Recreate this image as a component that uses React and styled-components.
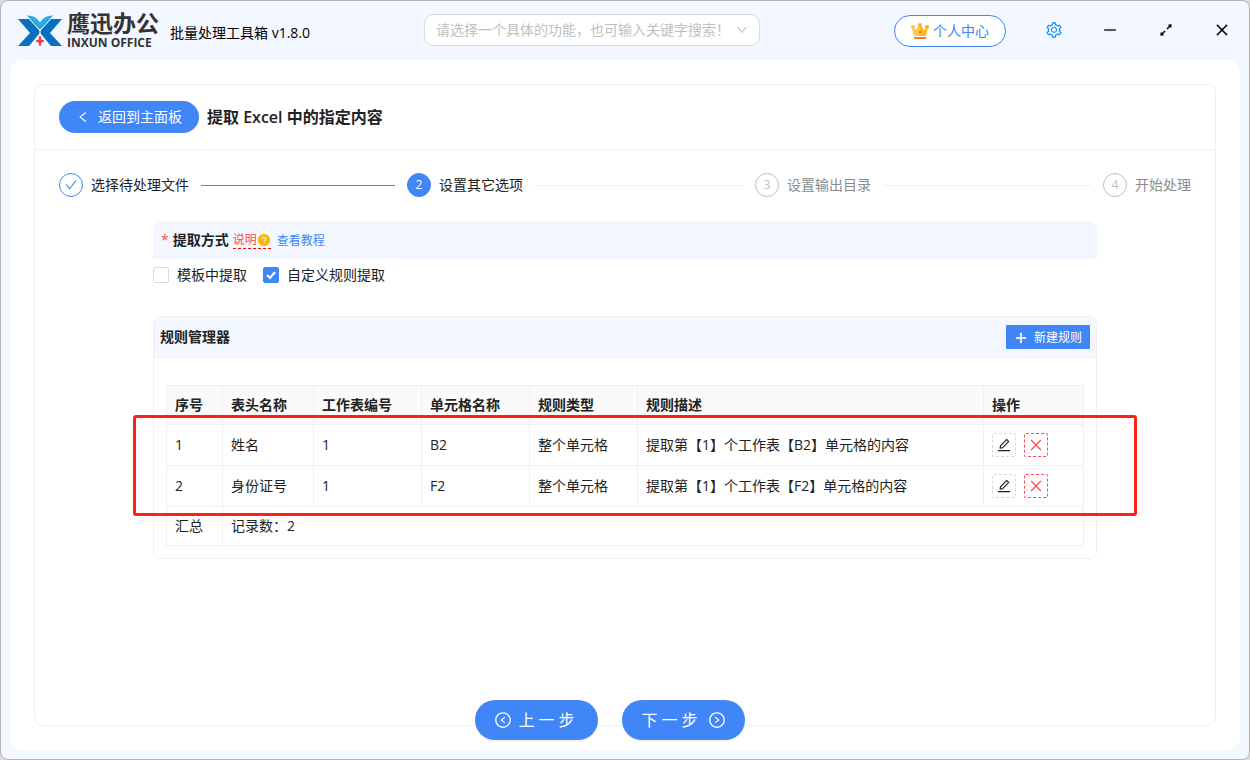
import React, { useState } from 'react';
import styled, { createGlobalStyle, css } from 'styled-components';
import {
  AiOutlineArrowsAlt,
  AiOutlineCheck,
  AiOutlineClose,
  AiOutlineDown,
  AiOutlineEdit,
  AiOutlineLeft,
  AiOutlineLeftCircle,
  AiOutlineMinus,
  AiOutlinePlus,
  AiOutlineRightCircle,
  AiOutlineSetting,
  AiFillQuestionCircle,
} from 'react-icons/ai';

const blue = '#4086f7';
const line = '#f0f0f0';
const pale = '#f3f7ff';

const GlobalStyle = createGlobalStyle`
  * {
    box-sizing: border-box;
  }

  body {
    margin: 0;
    background: #dcdcdc;
    color: #222;
    font-family: 'Open Sans', 'Noto Sans CJK SC', sans-serif;
    font-size: 14px;
    line-height: 22px;
  }

  button, input {
    font: inherit;
  }

  button {
    cursor: pointer;
  }

  svg {
    display: block;
    flex: none;
  }
`;

// --- Window ---

const Window = styled.div`
  display: flex;
  flex-direction: column;
  min-height: 100vh;
  padding: 0 9px 9px;
  background: ${pale};
  border: 1px solid #b4b4b4;
  border-radius: 8px;
`;

const TopBar = styled.header`
  display: grid;
  grid-template-columns: 11fr 336px 13fr;
  align-items: center;
  height: 59px;
  padding-left: 8px;
`;

const Brand = styled.div`
  display: flex;
  align-items: center;
  gap: 5px;
  color: #333;
`;

const BrandText = styled.div`
  display: flex;
  flex-direction: column;
  gap: 2px;
  margin: 0 6px 2px 0;
`;

const BrandName = styled.span`
  font-size: 23px;
  font-weight: 700;
  line-height: 24px;
`;

const BrandSub = styled.span`
  font-size: 12px;
  font-weight: 700;
  line-height: 12px;
`;

const Version = styled.span`
  padding-top: 4px;
  color: #000;
`;

const SearchBox = styled.label`
  display: flex;
  align-items: center;
  height: 32px;
  margin-bottom: 2px;
  padding: 0 11px;
  background: #fff;
  border: 1px solid #d9d9d9;
  border-radius: 10px;
  color: #bfbfbf;

  input {
    flex: 1;
    min-width: 0;
    padding: 0;
    border: 0;
    outline: 0;
    background: none;
  }

  input::placeholder {
    color: #bfbfbf;
  }
`;

const TopActions = styled.div`
  display: flex;
  align-items: center;
  justify-content: flex-end;
  gap: 32px;
  padding-right: 6px;
`;

const ProfileButton = styled.button`
  display: flex;
  align-items: center;
  gap: 4px;
  height: 32px;
  margin-right: 4px;
  padding: 0 16px;
  background: #fff;
  border: 1px solid ${blue};
  border-radius: 16px;
  color: ${blue};
`;

const WindowButton = styled.button`
  display: grid;
  place-items: center;
  width: 24px;
  height: 24px;
  margin-bottom: 2px;
  padding: 0;
  background: none;
  border: 0;
  color: ${({ $color }) => $color || '#000'};

  svg {
    stroke-width: ${({ $bold }) => ($bold ? 20 : 0)};
  }
`;

const Page = styled.main`
  display: flex;
  flex: 1;
  flex-direction: column;
  padding: 24px;
  background: #fff;
  border-radius: 12px;
`;

const Card = styled.section`
  display: flex;
  flex: 1;
  flex-direction: column;
  border: 1px solid ${line};
  border-radius: 8px;
`;

const CardHead = styled.div`
  display: flex;
  align-items: center;
  gap: 8px;
  padding: 16px 24px;
  border-bottom: 1px solid ${line};
`;

const CardTitle = styled.h1`
  margin: 0;
  font-size: 16px;
  font-weight: 600;
`;

const BackButton = styled.button`
  display: flex;
  align-items: center;
  gap: 8px;
  height: 32px;
  padding: 0 17px;
  background: ${blue};
  border: 0;
  border-radius: 16px;
  color: #fff;
`;

// --- Steps ---

const StepList = styled.ol`
  display: flex;
  margin: 0;
  padding: 23px 24px 24px;
  list-style: none;
`;

const Step = styled.li`
  display: flex;
  flex: 1;
  align-items: center;
  gap: 8px;
  margin-right: 12px;
  color: ${({ $state }) => ($state === 'wait' ? '#8c8c8c' : '#222')};
  white-space: nowrap;

  &::after {
    content: '';
    flex: 1;
    height: 1px;
    margin-left: 4px;
    background: ${({ $state }) => ($state === 'done' ? blue : line)};
  }

  &:last-child {
    flex: none;
    margin-right: 0;
  }

  &:last-child::after {
    display: none;
  }
`;

const StepMark = styled.span`
  display: grid;
  place-items: center;
  width: 24px;
  height: 24px;
  border: 1px solid #bfbfbf;
  border-radius: 50%;
  color: #bfbfbf;
  font-size: 12px;

  ${({ $state }) =>
    $state !== 'wait' &&
    css`
      border-color: ${blue};
      background: ${$state === 'active' ? blue : '#fff'};
      color: ${$state === 'active' ? '#fff' : blue};
    `}
`;

// --- Form ---

const Content = styled.div`
  width: 80%;
  margin: 0 auto;
`;

const FieldHead = styled.div`
  display: flex;
  align-items: center;
  height: 38px;
  padding: 0 8px;
  background: ${pale};
  border-radius: 8px 8px 0 0;
`;

const Required = styled.span`
  margin-right: 4px;
  color: #ff4d4f;
`;

const FieldTitle = styled.h2`
  margin: 0 4px 0 0;
  font-size: 14px;
  font-weight: 600;
`;

const HelpLink = styled.a`
  display: flex;
  align-items: center;
  margin-right: 6px;
  padding-top: 1px;
  border-bottom: 1px dashed #f00;
  color: #ff4d4f;
  font-size: 12px;
  line-height: 16px;
  text-decoration: none;

  svg {
    color: #f9b90c;
  }
`;

const TutorialLink = styled.a`
  padding-top: 2px;
  color: ${blue};
  font-size: 12px;
  text-decoration: none;
`;

const Options = styled.div`
  display: flex;
  gap: 16px;
  padding: 5px 0;
  margin-bottom: 25px;
`;

const CheckLabel = styled.label`
  display: flex;
  align-items: center;
  gap: 8px;
`;

const CheckBox = styled.span`
  position: relative;
  display: grid;
  width: 16px;
  height: 16px;

  input {
    width: 16px;
    height: 16px;
    margin: 0;
    appearance: none;
    background: #fff;
    border: 1px solid #d9d9d9;
    border-radius: 2px;
  }

  input:checked {
    background: ${blue};
    border-color: ${blue};
  }

  svg {
    position: absolute;
    inset: 0;
    pointer-events: none;
  }
`;

const Panel = styled.section`
  border: 1px solid ${line};
  border-radius: 8px;
`;

const PanelHead = styled.div`
  display: flex;
  align-items: center;
  justify-content: space-between;
  height: 41px;
  padding: 0 6px;
  background: ${pale};
  border-bottom: 1px solid ${line};
  border-radius: 8px 8px 0 0;
`;

const NewButton = styled.button`
  display: flex;
  align-items: center;
  gap: 6px;
  height: 24px;
  padding: 2px 8px 0;
  background: ${blue};
  border: 0;
  border-radius: 1px;
  color: #fff;
  font-size: 12px;

  svg {
    stroke-width: 50;
  }
`;

const PanelBody = styled.div`
  position: relative;
  padding: 27px 12px 12px;
`;

const Table = styled.table`
  width: 100%;
  table-layout: fixed;
  border: 1px solid ${line};
  border-width: 1px 0 0 1px;
  border-collapse: separate;
  border-spacing: 0;

  th, td {
    height: 41px;
    padding: 0 8px;
    border: 1px solid ${line};
    border-width: 0 1px 1px 0;
    text-align: left;
    white-space: nowrap;
  }

  th {
    height: 39px;
    background: #fafafa;
    font-weight: 600;
  }

  tfoot td {
    height: 39px;
  }
`;

const RowActions = styled.div`
  display: flex;
  gap: 8px;
`;

const IconButton = styled.button`
  display: grid;
  place-items: center;
  width: 24px;
  height: 24px;
  padding: 0;
  background: #fff;
  border: 1px dashed ${({ $danger }) => ($danger ? '#ff4d4f' : '#d9d9d9')};
  border-radius: 2px;
  color: ${({ $danger }) => ($danger ? '#ff4d4f' : '#222')};
`;

// red frame laid over the data rows, wider than the panel
const Highlight = styled.div`
  position: absolute;
  top: 57px;
  right: -41px;
  left: -21px;
  height: 101px;
  border: 3px solid #ff2015;
  border-radius: 3px;
  pointer-events: none;
`;

// --- Bottom buttons ---

const Pager = styled.div`
  display: flex;
  justify-content: center;
  gap: 24px;
  margin: auto 30px -15px 0;
`;

const PagerButton = styled.button`
  display: flex;
  align-items: center;
  justify-content: center;
  gap: 6px;
  width: 123px;
  height: 40px;
  padding: 0;
  background: ${blue};
  border: 0;
  border-radius: 20px;
  box-shadow: 0 2px 0 rgba(0, 0, 0, 0.04);
  color: #fff;
  font-size: 16px;
  letter-spacing: 4px;
`;

const steps = [
  { title: '选择待处理文件', state: 'done' },
  { title: '设置其它选项', state: 'active' },
  { title: '设置输出目录', state: 'wait' },
  { title: '开始处理', state: 'wait' },
];

const columns = [
  { title: '序号', width: 56 },
  { title: '表头名称', width: 91 },
  { title: '工作表编号', width: 108 },
  { title: '单元格名称', width: 108 },
  { title: '规则类型', width: 108 },
  { title: '规则描述' },
  { title: '操作', width: 100 },
];

const rules = [
  { name: '姓名', sheet: 1, cell: 'B2', type: '整个单元格' },
  { name: '身份证号', sheet: 1, cell: 'F2', type: '整个单元格' },
];

function LogoMark() {
  return (
    <svg width="44" height="32" viewBox="0 0 44 32" aria-hidden="true">
      <path d="M0 4h11l10 11q1 2 0 4L11 31H0l12-13z" fill="#0b6fc0" />
      <path d="M44 4H33L23 15q-1 2 0 4l10 12h11L32 18z" fill="#0b6fc0" />
      <path d="M8 0c7 0 11 2 14 7 3-5 7-7 14-7-4 4-7 9-14 15C15 9 12 4 8 0z" fill="#2cace2" stroke={pale} strokeWidth="1" />
      <path d="M22 21l1 4 3 1-3 1-1 4-1-4-3-1 3-1z" fill="#f5333f" stroke="#f5333f" />
    </svg>
  );
}

function Crown() {
  return (
    <svg width="18" height="18" viewBox="0 0 18 18" aria-hidden="true">
      <path d="M1 5l4 3 4-6 4 6 4-3-2 9H3z" fill="#ffb81c" />
      <path d="M1 5l4 3 4-6v12H3z" fill="#ffc84a" />
      <circle cx="2" cy="5" r="2" fill="#ffc84a" />
      <circle cx="16" cy="5" r="2" fill="#ffae10" />
      <circle cx="9" cy="3" r="2" fill="#ffb81c" />
      <circle cx="9" cy="10" r="1" fill="#e8501e" />
      <path d="M3 15h12v1q0 1-1 1H4q-1 0-1-1z" fill="#f47a1f" />
    </svg>
  );
}

function Checkbox({ label, defaultChecked }) {
  const [checked, setChecked] = useState(Boolean(defaultChecked));

  return (
    <CheckLabel>
      <CheckBox>
        <input type="checkbox" checked={checked} onChange={() => setChecked(!checked)} />
        {checked && (
          <svg width="16" height="16" viewBox="0 0 16 16" fill="none" stroke="#fff" strokeWidth="2">
            <path d="M4 8l3 3 5-6" />
          </svg>
        )}
      </CheckBox>
      {label}
    </CheckLabel>
  );
}

export default function App() {
  return (
    <>
      <GlobalStyle />
      <Window>
        <TopBar>
          <Brand>
            <LogoMark />
            <BrandText>
              <BrandName>鹰迅办公</BrandName>
              <BrandSub>INXUN OFFICE</BrandSub>
            </BrandText>
            <Version>批量处理工具箱 v1.8.0</Version>
          </Brand>
          <SearchBox>
            <input
              aria-label="搜索功能"
              placeholder="请选择一个具体的功能，也可输入关键字搜索！"
            />
            <AiOutlineDown size={12} />
          </SearchBox>
          <TopActions>
            <ProfileButton>
              <Crown />
              个人中心
            </ProfileButton>
            <WindowButton $color="#1890ff" aria-label="设置">
              <AiOutlineSetting size={18} />
            </WindowButton>
            <WindowButton $bold aria-label="最小化">
              <AiOutlineMinus size={16} />
            </WindowButton>
            <WindowButton $bold aria-label="最大化">
              <AiOutlineArrowsAlt size={16} />
            </WindowButton>
            <WindowButton $bold aria-label="关闭">
              <AiOutlineClose size={16} />
            </WindowButton>
          </TopActions>
        </TopBar>

        <Page>
          <Card>
            <CardHead>
              <BackButton>
                <AiOutlineLeft size={14} />
                返回到主面板
              </BackButton>
              <CardTitle>提取 Excel 中的指定内容</CardTitle>
            </CardHead>

            <StepList>
              {steps.map((step, i) => (
                <Step key={step.title} $state={step.state}>
                  <StepMark $state={step.state}>
                    {step.state === 'done' ? <AiOutlineCheck size={14} /> : i + 1}
                  </StepMark>
                  {step.title}
                </Step>
              ))}
            </StepList>

            <Content>
              <FieldHead>
                <Required>*</Required>
                <FieldTitle>提取方式</FieldTitle>
                <HelpLink href="#help">
                  说明
                  <AiFillQuestionCircle size={14} />
                </HelpLink>
                <TutorialLink href="#tutorial">查看教程</TutorialLink>
              </FieldHead>
              <Options>
                <Checkbox label="模板中提取" />
                <Checkbox label="自定义规则提取" defaultChecked />
              </Options>

              <Panel>
                <PanelHead>
                  <FieldTitle>规则管理器</FieldTitle>
                  <NewButton>
                    <AiOutlinePlus size={14} />
                    新建规则
                  </NewButton>
                </PanelHead>
                <PanelBody>
                  <Table>
                    <colgroup>
                      {columns.map((col) => (
                        <col key={col.title} width={col.width} />
                      ))}
                    </colgroup>
                    <thead>
                      <tr>
                        {columns.map((col) => (
                          <th key={col.title}>{col.title}</th>
                        ))}
                      </tr>
                    </thead>
                    <tbody>
                      {rules.map((rule, i) => (
                        <tr key={rule.cell}>
                          <td>{i + 1}</td>
                          <td>{rule.name}</td>
                          <td>{rule.sheet}</td>
                          <td>{rule.cell}</td>
                          <td>{rule.type}</td>
                          <td>{`提取第【${rule.sheet}】个工作表【${rule.cell}】单元格的内容`}</td>
                          <td>
                            <RowActions>
                              <IconButton aria-label="编辑">
                                <AiOutlineEdit size={16} />
                              </IconButton>
                              <IconButton $danger aria-label="删除">
                                <AiOutlineClose size={16} />
                              </IconButton>
                            </RowActions>
                          </td>
                        </tr>
                      ))}
                    </tbody>
                    <tfoot>
                      <tr>
                        <td>汇总</td>
                        <td colSpan={6}>记录数：{rules.length}</td>
                      </tr>
                    </tfoot>
                  </Table>
                  <Highlight />
                </PanelBody>
              </Panel>
            </Content>

            <Pager>
              <PagerButton>
                <AiOutlineLeftCircle size={18} />
                上一步
              </PagerButton>
              <PagerButton>
                下一步
                <AiOutlineRightCircle size={18} />
              </PagerButton>
            </Pager>
          </Card>
        </Page>
      </Window>
    </>
  );
}
